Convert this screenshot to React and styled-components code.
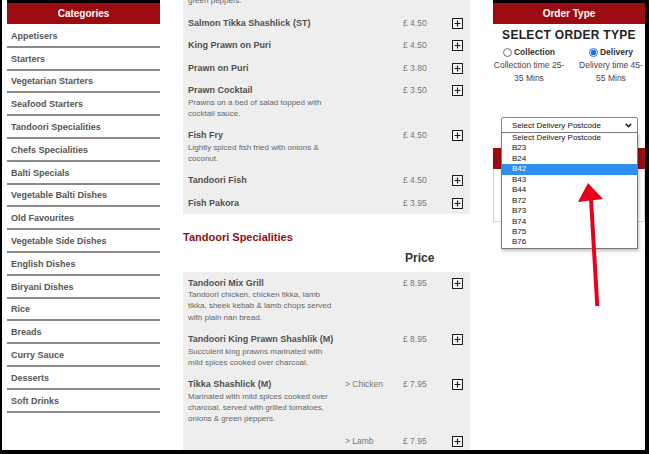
import React from "react";
import styled, { createGlobalStyle } from "styled-components";

const GlobalStyle = createGlobalStyle`
  html, body { margin: 0; padding: 0; background: #000; }
  body { font-family: "Liberation Sans", Arial, sans-serif; }
  * { box-sizing: border-box; }
`;

const RED = "#9a0c12";
const FONT = `"Liberation Sans", Arial, sans-serif`;

const Page = styled.div`
  position: relative;
  width: 649px;
  height: 454px;
  background: #000;
  padding: 0 4px 4px 2px;
  overflow: hidden;
`;

const Screen = styled.div`
  display: flex;
  align-items: flex-start;
  gap: 23px;
  width: 643px;
  height: 450px;
  padding-left: 5px;
  background: #fff;
  overflow: hidden;
`;

/* ---------- categories ---------- */

const Sidebar = styled.aside`
  flex: none;
  width: 153px;
  border-top: 3px solid #000;
`;

const PanelHeader = styled.div`
  height: 21px;
  background: ${RED};
  color: #fff;
  font: bold 10px/21px ${FONT};
  text-align: center;
`;

const CategoryList = styled.ul`
  list-style: none;
  margin: 1px 0 0;
  padding: 0;
`;

const CategoryItem = styled.li`
  display: flex;
  align-items: center;
  height: 22.8px;
  padding: 1px 0 0 4px;
  border-bottom: 2px solid #8a8a8a;
  font: bold 9px ${FONT};
  color: #555;
`;

/* ---------- menu ---------- */

const Menu = styled.main`
  flex: none;
  width: 287px;
  margin-top: -44.65px;
`;

const SectionTitle = styled.h2`
  margin: 15.5px 0 0;
  font: bold 11px/14px ${FONT};
  color: #8e1116;
`;

const Columns = `
  display: grid;
  grid-template-columns: 157px 58px 49px 11px;
`;

const PriceHeading = styled.div`
  ${Columns}
  margin-top: 7px;
  padding: 0 7px 0 5px;
  font: bold 12px/14px ${FONT};
  color: #333;
  & > span { grid-column: 3; padding-left: 2px; }
`;

const DishPanel = styled.div`
  background: #eeeeee;
  padding: 0 7px 0 5px;
  margin-top: ${(p) => p.$gap || 0}px;
`;

const DishRow = styled.div`
  ${Columns}
  align-items: start;
  padding: 5px 0;
`;

const DishName = styled.div`
  font: bold 9px/12.5px ${FONT};
  color: #505050;
`;

const DishDesc = styled.div`
  max-width: 148px;
  font: 8px/11.3px ${FONT};
  color: #666;
`;

const Option = styled.div`
  font: 8.5px/12.5px ${FONT};
  color: #777;
`;

const Price = styled(Option)``;

const AddButton = styled.button`
  width: 11px;
  height: 11px;
  margin-top: 1px;
  padding: 0;
  border: 0;
  background: none;
  display: block;
  svg { display: block; }
`;

function PlusBox() {
  return (
    <AddButton aria-label="Add">
      <svg width="11" height="11" viewBox="0 0 11 11">
        <rect x="0.5" y="0.5" width="10" height="10" fill="#f7f7f7" stroke="#1a1a1a" />
        <path d="M5.5 2.5v6M2.5 5.5h6" stroke="#1a1a1a" strokeWidth="1.2" />
      </svg>
    </AddButton>
  );
}

function Dish({ name, desc, option, price }) {
  return (
    <DishRow>
      <div>
        {name && <DishName>{name}</DishName>}
        {desc && <DishDesc>{desc}</DishDesc>}
      </div>
      <Option>{option}</Option>
      <Price>{price}</Price>
      <PlusBox />
    </DishRow>
  );
}

/* ---------- order panel ---------- */

const OrderColumn = styled.aside`
  flex: none;
  width: 152px;
  border-top: 3px solid #000;
`;

const OrderBody = styled.div`
  height: 124px;
  padding-top: 4px;
  text-align: center;
`;

const OrderTitle = styled.div`
  font: bold 12px/14px ${FONT};
  letter-spacing: 0.3px;
  color: #222;
`;

const ChoiceGrid = styled.div`
  display: grid;
  grid-template-columns: 72px 68px;
  column-gap: 12px;
  margin-top: 4.5px;
`;

const Choice = styled.div`
  display: flex;
  flex-direction: column;
  align-items: center;
`;

const ChoiceLabel = styled.label`
  display: flex;
  align-items: center;
  gap: 2px;
  height: 11px;
  font: bold 8.5px ${FONT};
  color: #333;
`;

const RadioMark = styled.span`
  width: 9px;
  height: 9px;
  border-radius: 50%;
  border: 1px solid ${(p) => (p.$checked ? "#1b6ee0" : "#767676")};
  background: ${(p) =>
    p.$checked
      ? "radial-gradient(circle, #1b6ee0 0 2.6px, #fff 3px)"
      : "#fff"};
`;

const ChoiceTime = styled.div`
  margin-top: 1px;
  font: 8.5px/13px ${FONT};
  color: #444;
`;

const PostcodeSelect = styled.div`
  position: relative;
  height: 16px;
  margin: 32.5px 7px 0 8px;
  padding-left: 10px;
  border: 1px solid #6f8fc4;
  border-radius: 2px;
  background: #fff;
  display: flex;
  align-items: center;
  justify-content: space-between;
  padding-right: 5px;
  font: 8px ${FONT};
  color: #111;
  text-align: left;
`;

const OptionList = styled.ul`
  position: absolute;
  top: 100%;
  left: -1px;
  right: -1px;
  margin: 0;
  padding: 0;
  list-style: none;
  background: #fff;
  border: 1px solid #7a7a7a;
  box-shadow: 1px 2px 3px rgba(0, 0, 0, 0.25);
  z-index: 2;
`;

const OptionItem = styled.li`
  height: 10.45px;
  padding-left: 10px;
  font: 8px/10.45px ${FONT};
  color: ${(p) => (p.$active ? "#fff" : "#111")};
  background: ${(p) => (p.$active ? "#2f8ff0" : "transparent")};
`;

const CartHeader = styled.div`
  height: 21px;
  background: ${RED};
`;

const CartBody = styled.div`
  height: 53px;
  border: 1px solid #d4d4d4;
  border-top: 0;
`;

/* red call-out arrow drawn over the open postcode list */
const Pointer = styled.svg`
  position: absolute;
  left: 0;
  top: 0;
  z-index: 5;
  pointer-events: none;
`;

const categories = [
  "Appetisers",
  "Starters",
  "Vegetarian Starters",
  "Seafood Starters",
  "Tandoori Specialities",
  "Chefs Specialities",
  "Balti Specials",
  "Vegetable Balti Dishes",
  "Old Favourites",
  "Vegetable Side Dishes",
  "English Dishes",
  "Biryani Dishes",
  "Rice",
  "Breads",
  "Curry Sauce",
  "Desserts",
  "Soft Drinks",
];

const starters = [
  {
    name: "Chicken Tikka Shashlick (ST)",
    desc: "Marinated with mild spices cooked over charcoal with grilled tomatoes, onions & green peppers.",
    price: "£ 4.50",
  },
  { name: "Salmon Tikka Shashlick (ST)", price: "£ 4.50" },
  { name: "King Prawn on Puri", price: "£ 4.50" },
  { name: "Prawn on Puri", price: "£ 3.80" },
  {
    name: "Prawn Cocktail",
    desc: "Prawns on a bed of salad topped with cocktail sauce.",
    price: "£ 3.50",
  },
  {
    name: "Fish Fry",
    desc: "Lightly spiced fish fried with onions & coconut.",
    price: "£ 4.50",
  },
  { name: "Tandoori Fish", price: "£ 4.50" },
  { name: "Fish Pakora", price: "£ 3.95" },
];

const tandoori = [
  {
    name: "Tandoori Mix Grill",
    desc: "Tandoori chicken, chicken tikka, lamb tikka, sheek kebab & lamb chops served with plain nan bread.",
    price: "£ 8.95",
  },
  {
    name: "Tandoori King Prawn Shashlik (M)",
    desc: "Succulent king prawns marinated with mild spices cooked over charcoal.",
    price: "£ 8.95",
  },
  {
    name: "Tikka Shashlick (M)",
    desc: "Marinated with mild spices cooked over charcoal, served with grilled tomatoes, onions & green peppers.",
    option: "> Chicken",
    price: "£ 7.95",
  },
  { option: "> Lamb", price: "£ 7.95" },
];

const postcodes = ["Select Delivery Postcode", "B23", "B24", "B42", "B43", "B44", "B72", "B73", "B74", "B75", "B76"];

export default function App() {
  return (
    <>
      <GlobalStyle />
      <Page>
        <Screen>
          <Sidebar>
            <PanelHeader>Categories</PanelHeader>
            <CategoryList>
              {categories.map((c) => (
                <CategoryItem key={c}>{c}</CategoryItem>
              ))}
            </CategoryList>
          </Sidebar>

          <Menu>
            <DishPanel>
              {starters.map((d) => (
                <Dish key={d.name} {...d} />
              ))}
            </DishPanel>
            <SectionTitle>Tandoori Specialities</SectionTitle>
            <PriceHeading>
              <span>Price</span>
            </PriceHeading>
            <DishPanel $gap={6.75}>
              {tandoori.map((d, i) => (
                <Dish key={i} {...d} />
              ))}
            </DishPanel>
          </Menu>

          <OrderColumn>
            <PanelHeader>Order Type</PanelHeader>
            <OrderBody>
              <OrderTitle>SELECT ORDER TYPE</OrderTitle>
              <ChoiceGrid>
                <Choice>
                  <ChoiceLabel>
                    <RadioMark />
                    Collection
                  </ChoiceLabel>
                  <ChoiceTime>Collection time 25-35 Mins</ChoiceTime>
                </Choice>
                <Choice>
                  <ChoiceLabel>
                    <RadioMark $checked />
                    Delivery
                  </ChoiceLabel>
                  <ChoiceTime>Delivery time 45-55 Mins</ChoiceTime>
                </Choice>
              </ChoiceGrid>
              <PostcodeSelect>
                <span>Select Delivery Postcode</span>
                <svg width="7" height="5" viewBox="0 0 7 5">
                  <path d="M0.8 0.9L3.5 3.6L6.2 0.9" fill="none" stroke="#222" strokeWidth="1.5" />
                </svg>
                <OptionList>
                  {postcodes.map((p) => (
                    <OptionItem key={p} $active={p === "B42"}>
                      {p}
                    </OptionItem>
                  ))}
                </OptionList>
              </PostcodeSelect>
            </OrderBody>
            <CartHeader />
            <CartBody />
          </OrderColumn>
        </Screen>

        <Pointer width="649" height="454" viewBox="0 0 649 454">
          <path d="M591 199L597.3 306" stroke="#e6001a" strokeWidth="4" />
          <polygon points="588,183 578,202 603,199" fill="#e6001a" />
        </Pointer>
      </Page>
    </>
  );
}
